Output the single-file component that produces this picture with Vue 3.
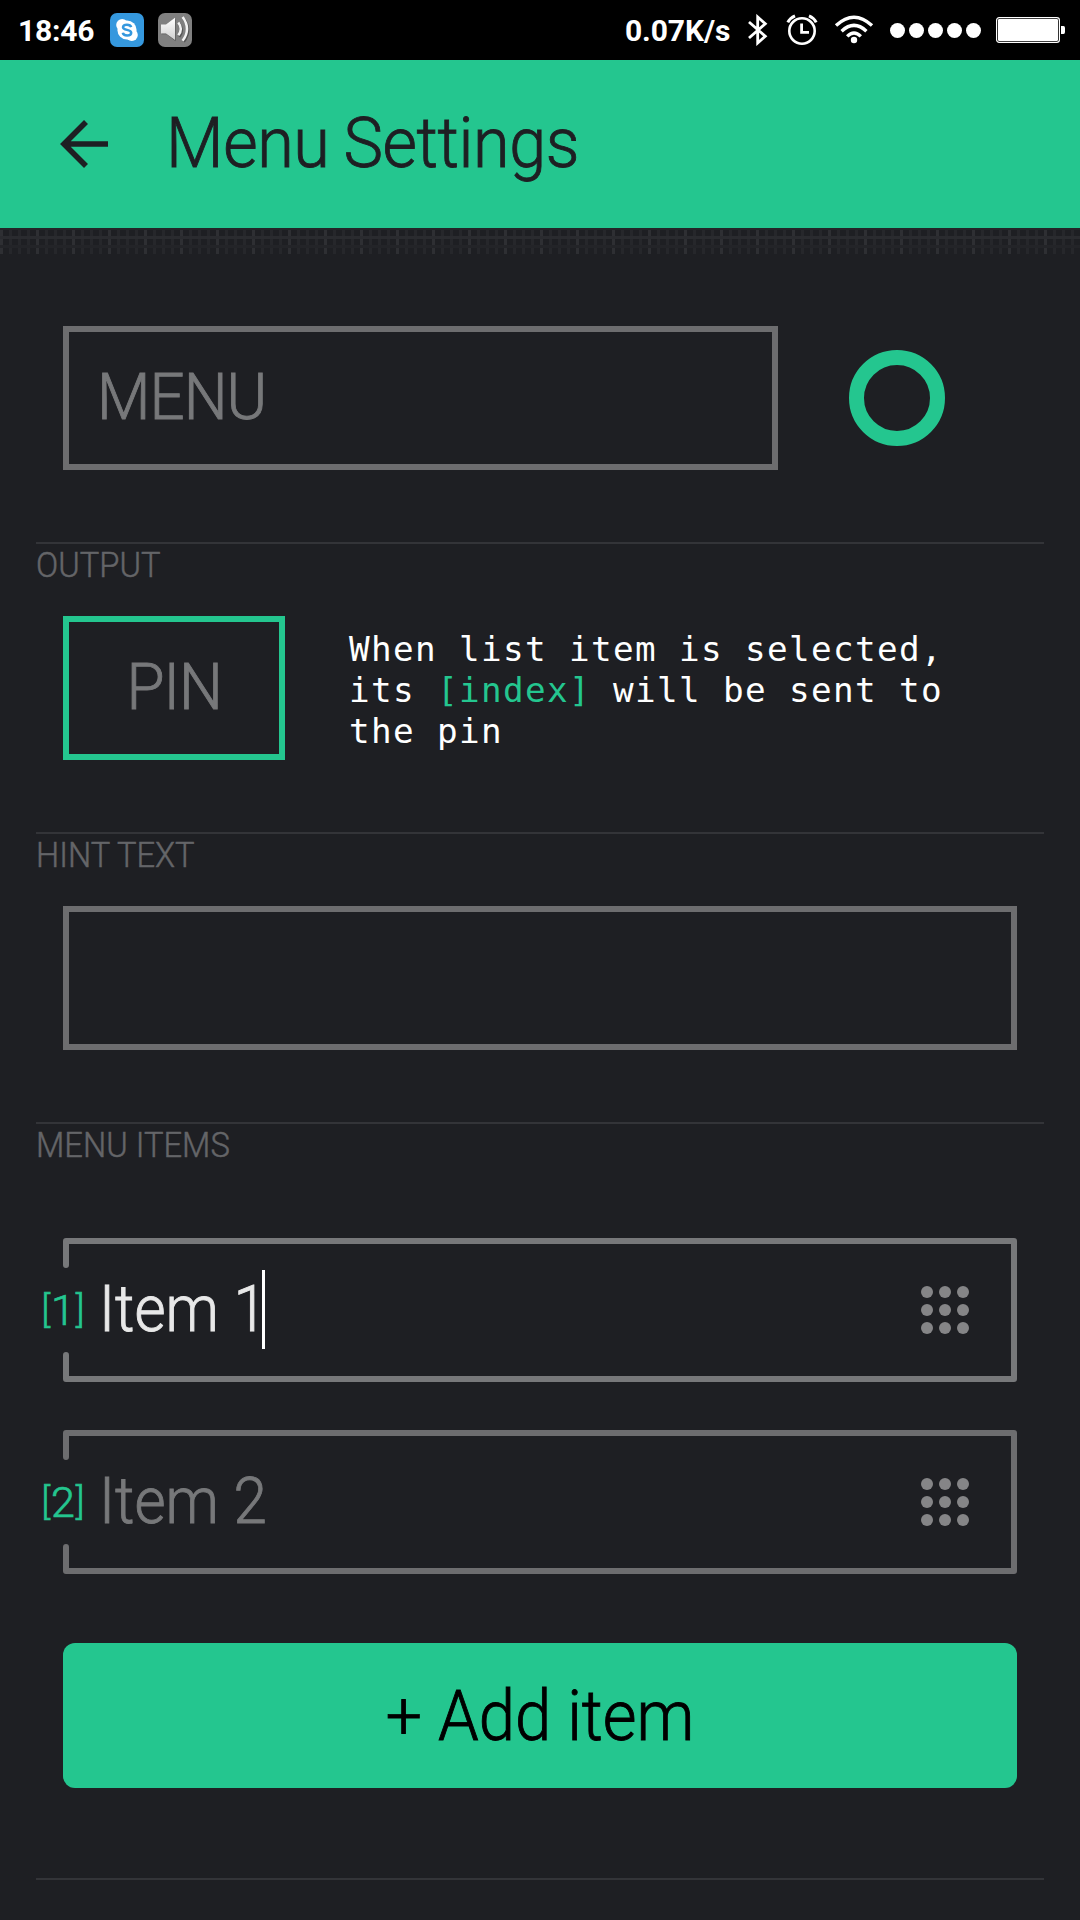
<script setup>
import { ref } from 'vue'

const items = ref([
  { id: 1, label: 'Item 1', editing: true },
  { id: 2, label: 'Item 2', editing: false }
])
const signalDots = [0, 1, 2, 3, 4]
const handle = [8, 26, 44]
</script>

<template>
  <div class="screen">
    <div class="status">
      <span class="clock">18:46</span>
      <svg class="skype" width="34" height="34" viewBox="0 0 34 34">
        <rect width="34" height="34" rx="7" fill="#3598de" />
        <circle cx="17" cy="17" r="9.6" fill="#fff" />
        <circle cx="12.2" cy="12" r="6" fill="#fff" />
        <circle cx="21.8" cy="22" r="6" fill="#fff" />
        <path d="M21.2 14.2C20.6 12.5 19 11.7 17 11.7C14.6 11.7 13 12.7 13 14.3C13 16 14.6 16.4 17 16.9C19.6 17.4 21.2 18 21.2 19.8C21.2 21.6 19.5 22.6 17.1 22.6C14.8 22.6 13.2 21.6 12.8 19.8" fill="none" stroke="#3598de" stroke-width="2.5" />
      </svg>
      <svg class="speaker" width="34" height="34" viewBox="0 0 34 34">
        <defs>
          <linearGradient id="cone" x1="0" y1="0" x2="0" y2="1">
            <stop offset="0" stop-color="#fff" />
            <stop offset="1" stop-color="#cfcfcf" />
          </linearGradient>
        </defs>
        <rect width="34" height="34" rx="7" fill="#808080" />
        <g transform="translate(.6 1.2)" opacity=".45">
          <path d="M3 12H8L17 5V27L8 20H3Z" fill="#222" />
          <path d="M20.5 9.5Q25.5 16 20.5 22.5M25 4.5Q33.5 16 25 27.5" fill="none" stroke="#222" stroke-width="3" />
        </g>
        <path d="M3 11.6H8L17 4.8V27L8 20.4H3Z" fill="url(#cone)" />
        <path d="M20.3 9.5Q25.3 16 20.3 22.3M24.6 4Q33.4 16 24.6 27.8" fill="none" stroke="#f2f2f2" stroke-width="2.5" />
      </svg>
      <span class="speed">0.07K/s</span>
      <svg class="bluetooth" width="22" height="32" viewBox="0 0 22 32">
        <path d="M2 8L18.3 22.3L10.7 29V3L18.3 9.7L2 24" fill="none" stroke="#fff" stroke-width="2.8" />
      </svg>
      <svg class="alarm" width="32" height="32" viewBox="0 0 32 32">
        <g fill="none" stroke="#fff">
          <circle cx="16" cy="17" r="12.7" stroke-width="2.6" />
          <path d="M15.6 9.5V18.3H23" stroke-width="2.8" />
          <path d="M1.8 8.4Q4 4 9 1.9M30.2 8.4Q28 4 23 1.9" stroke-width="3" />
        </g>
      </svg>
      <svg class="wifi" width="40" height="30" viewBox="0 0 40 30">
        <g fill="none" stroke="#fff" stroke-width="3.4">
          <path d="M2 10.6Q20 -6 38 10.6" />
          <path d="M7.6 16.2Q20 4.6 32.4 16.2" />
          <path d="M13.2 21.4Q20 14.6 26.8 21.4" />
        </g>
        <circle cx="20" cy="25" r="3.2" fill="#fff" />
      </svg>
      <div class="signal"><i v-for="d in signalDots" :key="d" /></div>
      <svg class="battery" width="69" height="26" viewBox="0 0 69 26">
        <rect x=".6" y=".6" width="62.8" height="24.8" rx="2.6" fill="none" stroke="#fff" stroke-width="1.2" />
        <rect x="2" y="2" width="60" height="22" rx="1.2" fill="#fff" />
        <path d="M65 9H67.5Q69 9 69 11V15Q69 17 67.5 17H65Z" fill="#fff" />
      </svg>
    </div>

    <header class="bar">
      <svg class="back" width="48" height="48" viewBox="0 0 48 48">
        <path d="M26 2L4 24L26 46M4 24H48" fill="none" stroke="#1e1f23" stroke-width="5.6" />
      </svg>
      <h1>Menu Settings</h1>
    </header>
    <div class="mesh" />

    <section class="name-row">
      <div class="field name"><span>MENU</span></div>
      <div class="ring" />
    </section>

    <section class="group">
      <h2>OUTPUT</h2>
      <div class="output">
        <div class="field pin"><span>PIN</span></div>
        <p>When list item is selected,<br>its <em>[index]</em> will be sent to<br>the pin</p>
      </div>
    </section>

    <section class="group">
      <h2>HINT TEXT</h2>
      <div class="field hint" />
    </section>

    <section class="group last">
      <h2>MENU ITEMS</h2>
      <div class="items">
        <div v-for="it in items" :key="it.id" class="item" :class="{ editing: it.editing }">
          <svg class="frame" width="954" height="144" viewBox="0 0 954 144">
            <path d="M3 27V3H951V141H3V117" fill="none" stroke="currentColor" stroke-width="6" stroke-linecap="round" stroke-linejoin="round" />
          </svg>
          <span class="index"><b>[</b><span>{{ it.id }}</span><b>]</b></span>
          <span class="label">{{ it.label }}</span>
          <span v-if="it.editing" class="caret" />
          <svg class="handle" width="52" height="52" viewBox="0 0 52 52">
            <template v-for="y in handle" :key="y">
              <circle v-for="x in handle" :key="x" :cx="x" :cy="y" r="6" fill="#858587" />
            </template>
          </svg>
        </div>
      </div>
      <button class="add"><span class="plus">+</span><span class="text">Add item</span></button>
    </section>
    <div class="rule" />
  </div>
</template>

<style>
body {
  margin: 0;
  background: #1e1f23;
}
</style>

<style scoped>
.screen {
  width: 1080px;
  height: 1920px;
  overflow: hidden;
  background: #1e1f23;
  font-family: Roboto, "Liberation Sans", sans-serif;
  font-weight: 300;
  display: flex;
  flex-direction: column;
}
.status {
  height: 60px;
  flex: none;
  background: #000;
  color: #fff;
  display: flex;
  align-items: center;
  font-size: 30px;
  font-weight: 700;
  white-space: nowrap;
}
.status svg { flex: none; }
.clock { width: 92px; padding-left: 18px; letter-spacing: -0.2px; }
.skype { margin-right: 14px; }
.speed { margin-left: 433px; width: 122px; letter-spacing: -0.1px; }
.bluetooth { margin-right: 17px; }
.alarm { margin-right: 16px; }
.wifi { margin-right: 16px; }
.signal { display: flex; gap: 4px; margin-right: 15px; }
.signal i { width: 15px; height: 15px; border-radius: 50%; background: #fff; }

.bar {
  height: 168px;
  flex: none;
  background: #24c68f;
  display: flex;
  align-items: center;
  color: #1e1f23;
}
.back { margin-left: 60px; }
h1 {
  margin: -2px 0 0 58px;
  font-size: 70px;
  line-height: 80px;
  font-weight: 300;
  letter-spacing: -0.4px;
  word-spacing: -2px;
  transform: scaleX(0.95);
  transform-origin: left;
  -webkit-text-stroke: 0.9px currentColor;
}
.mesh {
  height: 26px;
  flex: none;
  background:
    linear-gradient(#242529 2px, transparent 2px 8px, #2a2b2f 8px 11px, transparent 11px 17px, #232428 17px 20px, transparent 20px),
    repeating-linear-gradient(90deg, #2e2f33 0 3px, transparent 3px 36px),
    repeating-linear-gradient(90deg, #26272b 0 3px, transparent 3px 9px);
}
.field {
  box-sizing: border-box;
  height: 144px;
  border: 6px solid #6d6d6f;
  color: #77787a;
  font-size: 65px;
  line-height: 131px;
  -webkit-text-stroke: 0.9px currentColor;
}
.field span {
  display: inline-block;
  letter-spacing: -1px;
  transform: scaleX(0.95);
  transform-origin: left;
}
.name-row {
  height: 288px;
  flex: none;
  box-sizing: border-box;
  padding: 72px 0 0 63px;
  display: flex;
}
.name { width: 715px; padding-left: 28px; }
.ring {
  box-sizing: border-box;
  width: 96px;
  height: 96px;
  margin: 24px 0 0 71px;
  border: 15px solid #24c68f;
  border-radius: 50%;
}
.group {
  height: 290px;
  flex: none;
  box-sizing: border-box;
  margin: 0 36px;
  border-top: 2px solid #333438;
}
.group h2 {
  margin: 0 0 0 -0.5px;
  height: 72px;
  font-size: 35px;
  line-height: 44px;
  font-weight: 300;
  color: #646568;
  transform: scaleX(0.935);
  transform-origin: left;
  -webkit-text-stroke: 0.5px currentColor;
}
.output { display: flex; padding-left: 27px; }
.pin {
  width: 222px;
  border-color: #24c68f;
  text-align: center;
}
.pin span { transform-origin: center; }
.output p {
  margin: 13px 0 0 64px;
  font: 400 34.3px/41px "DejaVu Sans Mono", monospace;
  letter-spacing: 1.35px;
  color: #fff;
  white-space: nowrap;
}
.output em { font-style: normal; color: #24c68f; }
.hint { margin: 0 27px; }
.last { height: 756px; }
.items {
  padding: 42px 27px 0;
  display: flex;
  flex-direction: column;
  gap: 48px;
}
.item {
  position: relative;
  height: 144px;
  display: flex;
  align-items: center;
  color: #6d6d6f;
}
.item.editing { color: #77787a; }
.frame { position: absolute; left: 0; top: 0; }
.index {
  width: 43px;
  margin-left: -21.5px;
  flex: none;
  display: flex;
  justify-content: space-between;
  font-size: 43px;
  line-height: 50px;
  color: #24c68f;
  -webkit-text-stroke: 0.7px currentColor;
}
.index b { font-weight: 300; font-size: 36px; }
.label {
  margin: -2px 0 0 14px;
  font-size: 65px;
  line-height: 80px;
  transform: scaleX(0.925);
  transform-origin: left;
  color: #77787a;
  -webkit-text-stroke: 0.9px currentColor;
}
.editing .label { color: #e8e8e8; }
.caret { width: 3px; height: 79px; background: #fff; margin: -2px 0 0 -17.5px; }
.handle { margin-left: auto; margin-right: 46px; }
.add {
  display: flex;
  justify-content: center;
  align-items: center;
  gap: 16px;
  width: 954px;
  height: 145px;
  margin: 69px 27px 0;
  padding: 0;
  border: 0;
  border-radius: 12px;
  background: #24c68f;
  color: #000;
  font: 300 70px/136px Roboto, "Liberation Sans", sans-serif;
  -webkit-text-stroke: 0.9px currentColor;
}
.plus { font-size: 64px; margin-top: 3px; }
.text {
  margin-right: -19px;
  transform: scaleX(0.932);
  transform-origin: left;
}
.rule {
  flex: none;
  height: 2px;
  margin: 0 36px;
  background: #333438;
}
</style>
